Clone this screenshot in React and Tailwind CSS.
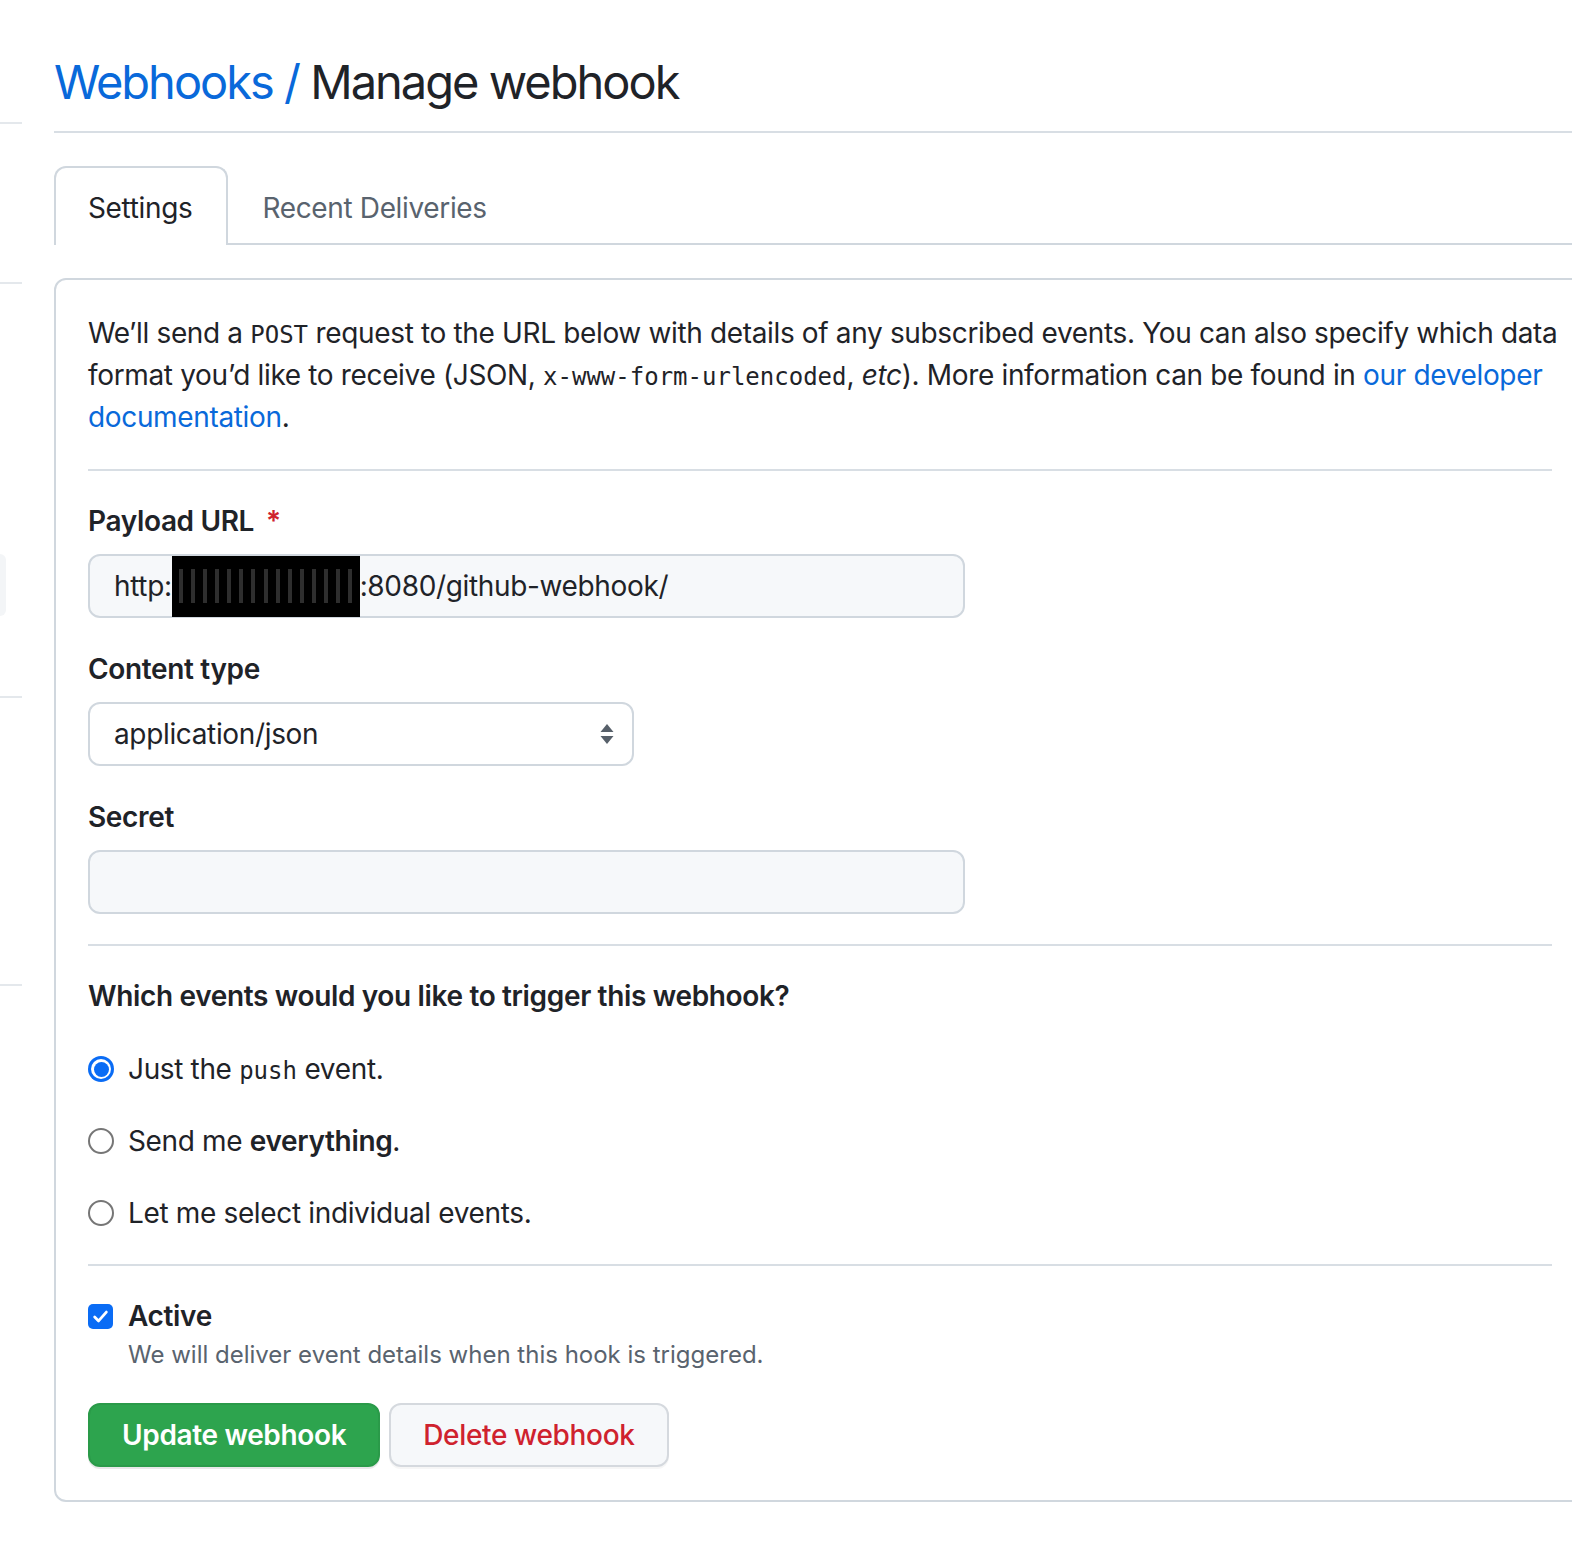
import React from 'react';

function Radio({ checked }) {
    if (checked) {
        return (
            <span className="flex h-[26px] w-[26px] shrink-0 items-center justify-center rounded-full bg-[#0a6cf5]">
                <span className="flex h-[20px] w-[20px] items-center justify-center rounded-full bg-white">
                    <span className="h-[15px] w-[15px] rounded-full bg-[#0a6cf5]" />
                </span>
            </span>
        );
    }
    return <span className="h-[26px] w-[26px] shrink-0 rounded-full border-2 border-[#767676] bg-white" />;
}

function Field({ label, required, children }) {
    return (
        <div className="mb-[30px]">
            <div className="mb-[12px] text-[28px] leading-[42px] font-semibold">
                {label}
                {required && <span className="ml-[12px] text-[#cf222e]">*</span>}
            </div>
            {children}
        </div>
    );
}

const mono = "font-['DejaVu_Sans_Mono',monospace] text-[24px] leading-none tracking-normal";

export default function App() {
    return (
        <div className="flex h-[1546px] w-[1572px] overflow-hidden bg-white font-['Inter','Noto_Sans',sans-serif] text-[#1f2328]">
            {/* cut-off sidebar */}
            <aside className="w-[22px] shrink-0">
                <div className="h-[124px] border-b-2 border-[#e4e8ec]" />
                <div className="h-[160px] border-b-2 border-[#e4e8ec]" />
                <div className="h-[270px]" />
                <div className="h-[62px] w-[6px] rounded-r-[10px] bg-[#f3f5f7]" />
                <div className="h-[82px] border-b-2 border-[#e4e8ec]" />
                <div className="h-[288px] border-b-2 border-[#e4e8ec]" />
            </aside>

            <main className="ml-[32px] w-[1532px] shrink-0">
                <h1 className="border-b-2 border-[#d8dee4] pt-[52px] pb-[19px] text-[47px] leading-[60px] font-normal tracking-[-2px]">
                    <a href="#" className="text-[#0969da]">Webhooks /</a> Manage webhook
                </h1>

                <nav className="mt-[33px] flex border-b-2 border-[#d0d7de] text-[28px] leading-[42px] tracking-[-0.35px]">
                    <div className="-mb-[2px] rounded-t-[12px] border-2 border-b-0 border-[#d0d7de] bg-white pt-[19px] pr-[34px] pb-[16px] pl-[32px]">
                        Settings
                    </div>
                    <div className="px-[34px] pt-[21px] text-[#59636e]">Recent Deliveries</div>
                </nav>

                <section className="mt-[33px] rounded-[12px] border-2 border-[#d0d7de] px-[32px] pt-[32px] pb-[33px] text-[28px] leading-[42px] tracking-[-0.35px]">
                    <p>
                        <span className="whitespace-nowrap">
                            We’ll send a <code className={mono}>POST</code> request to the URL below with details of any subscribed events. You can also specify which data
                        </span>
                        <br />
                        <span className="whitespace-nowrap">
                            format you’d like to receive (JSON, <code className={mono}>x-www-form-urlencoded</code>, <em>etc</em>). More information can be found in{' '}
                            <a href="#" className="text-[#0969da]">
                                our developer
                            </a>
                        </span>
                        <br />
                        <a href="#" className="text-[#0969da]">
                            documentation
                        </a>
                        .
                    </p>

                    <div className="mt-[31px] mb-[29px] w-[1464px] border-t-2 border-[#d8dee4]" />

                    <Field label="Payload URL" required>
                        <div className="flex h-[64px] w-[877px] items-center rounded-[12px] border-2 border-[#d0d7de] bg-[#f6f8fa] pl-[24px]">
                            <span>http:</span>
                            <span className="flex h-[61px] w-[188px] items-center justify-around bg-black px-[3px]">
                                {Array.from({ length: 15 }).map((_, i) => (
                                    <span key={i} className="h-[34px] w-[4px] bg-[#2e2e2e]" />
                                ))}
                            </span>
                            <span>:8080/github-webhook/</span>
                        </div>
                    </Field>

                    <Field label="Content type">
                        <div className="flex h-[64px] w-[546px] items-center justify-between rounded-[12px] border-2 border-[#d0d7de] bg-white pr-[17px] pl-[24px]">
                            <span>application/json</span>
                            <svg width="16" height="22" viewBox="0 0 16 22" className="text-[#57606a]">
                                <path d="M8 1 L14.5 9 H1.5 Z" fill="currentColor" />
                                <path d="M8 21 L14.5 13 H1.5 Z" fill="currentColor" />
                            </svg>
                        </div>
                    </Field>

                    <Field label="Secret">
                        <div className="h-[64px] w-[877px] rounded-[12px] border-2 border-[#d0d7de] bg-[#f6f8fa]" />
                    </Field>

                    <div className="mb-[29px] w-[1464px] border-t-2 border-[#d8dee4]" />

                    <h3 className="font-semibold">Which events would you like to trigger this webhook?</h3>

                    <div className="mt-[31px] flex flex-col gap-[30px]">
                        <label className="flex items-center gap-[14px]">
                            <Radio checked />
                            <span>
                                Just the <code className={mono}>push</code> event.
                            </span>
                        </label>
                        <label className="flex items-center gap-[14px]">
                            <Radio />
                            <span>
                                Send me <strong className="font-semibold">everything</strong>.
                            </span>
                        </label>
                        <label className="flex items-center gap-[14px]">
                            <Radio />
                            <span>Let me select individual events.</span>
                        </label>
                    </div>

                    <div className="mt-[30px] mb-[29px] w-[1464px] border-t-2 border-[#d8dee4]" />

                    <label className="flex items-center gap-[15px]">
                        <span className="flex h-[25px] w-[25px] items-center justify-center rounded-[5px] bg-[#0a6cf5]">
                            <svg width="17" height="17" viewBox="0 0 16 16">
                                <path d="M2.5 8.5 L6.2 12.2 L13.5 3.8" fill="none" stroke="white" strokeWidth="2.6" strokeLinecap="round" strokeLinejoin="round" />
                            </svg>
                        </span>
                        <span className="font-semibold">Active</span>
                    </label>
                    <p className="ml-[40px] text-[24px] leading-[36px] tracking-normal text-[#59636e]">We will deliver event details when this hook is triggered.</p>

                    <div className="mt-[30px] flex gap-[9px]">
                        <button className="h-[64px] rounded-[12px] border-2 border-[#2a9a49] bg-[#2da44e] px-[32px] font-semibold text-white shadow-[0_2px_0_rgba(27,31,36,0.1)]">
                            Update webhook
                        </button>
                        <button className="h-[64px] rounded-[12px] border-2 border-[#d5d9de] bg-[#f6f8fa] px-[32px] font-medium text-[#cf222e] shadow-[0_2px_0_rgba(27,31,36,0.04)]">
                            Delete webhook
                        </button>
                    </div>
                </section>
            </main>
        </div>
    );
}
